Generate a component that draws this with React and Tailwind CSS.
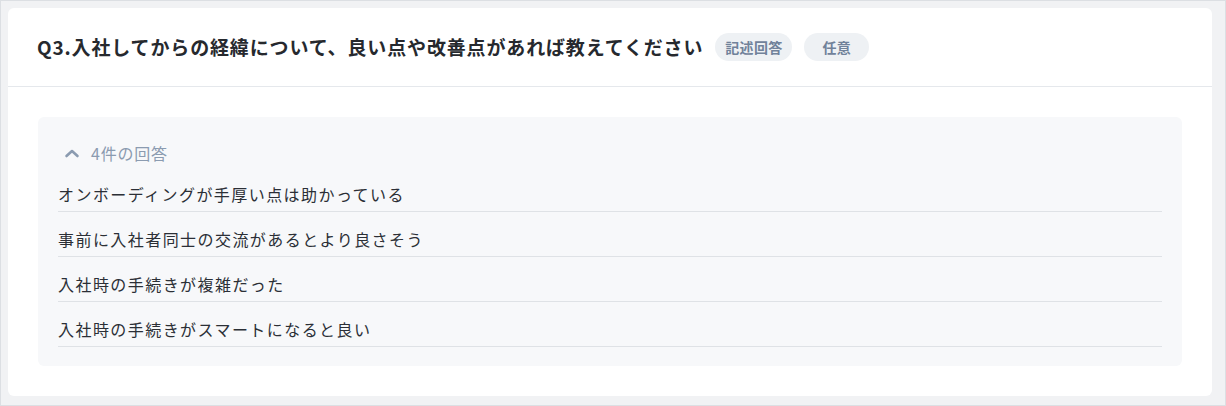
const answers = [
  "オンボーディングが手厚い点は助かっている",
  "事前に入社者同士の交流があるとより良さそう",
  "入社時の手続きが複雑だった",
  "入社時の手続きがスマートになると良い",
];

const App = () => {
  return (
    <div
      className="h-[406px] w-[1226px] border border-[#dcdfe3] bg-[#f1f2f4] p-[7px]"
      style={{ fontFamily: '"Noto Sans CJK JP", "Noto Sans", sans-serif' }}
    >
      <div className="h-[388px] w-[1204px] rounded-md bg-white">
        <div className="flex h-[79px] items-center gap-[12px] border-b border-[#e5e8ec] px-[29px]">
          <h2 className="text-[19px] font-bold tracking-[0.045em] text-[#26292e]">
            Q3.入社してからの経緯について、良い点や改善点があれば教えてください
          </h2>
          <span className="flex h-[28px] items-center rounded-full bg-[#eef1f4] px-[10px] text-[14px] font-bold tracking-[0.02em] text-[#71829a]">
            記述回答
          </span>
          <span className="flex h-[28px] items-center rounded-full bg-[#eef1f4] px-[18px] text-[14px] font-bold tracking-[0.02em] text-[#71829a]">
            任意
          </span>
        </div>
        <div className="px-[30px] pt-[30px]">
          <div className="rounded-md bg-[#f7f8fa] px-[20px] pb-[19px] pt-[25px]">
            <button className="flex items-center gap-[11px] pl-[6px] text-[16px] leading-[22px] tracking-[0.05em] text-[#8b9bb0]">
              <svg width="16" height="16" viewBox="0 0 16 16" fill="none" stroke="currentColor" strokeWidth="2.6" strokeLinecap="round" strokeLinejoin="round">
                <path d="M2.5 11l5.5-5 5.5 5" />
              </svg>
              4件の回答
            </button>
            <ul className="mt-[3px]">
              {answers.map((a) => (
                <li
                  key={a}
                  className="border-b border-[#dfe2e6] pb-[6px] pt-[16px] text-[16px] leading-[22px] tracking-[0.09em] text-[#2b2f36]"
                >
                  {a}
                </li>
              ))}
            </ul>
          </div>
        </div>
      </div>
    </div>
  );
};

export default App;
